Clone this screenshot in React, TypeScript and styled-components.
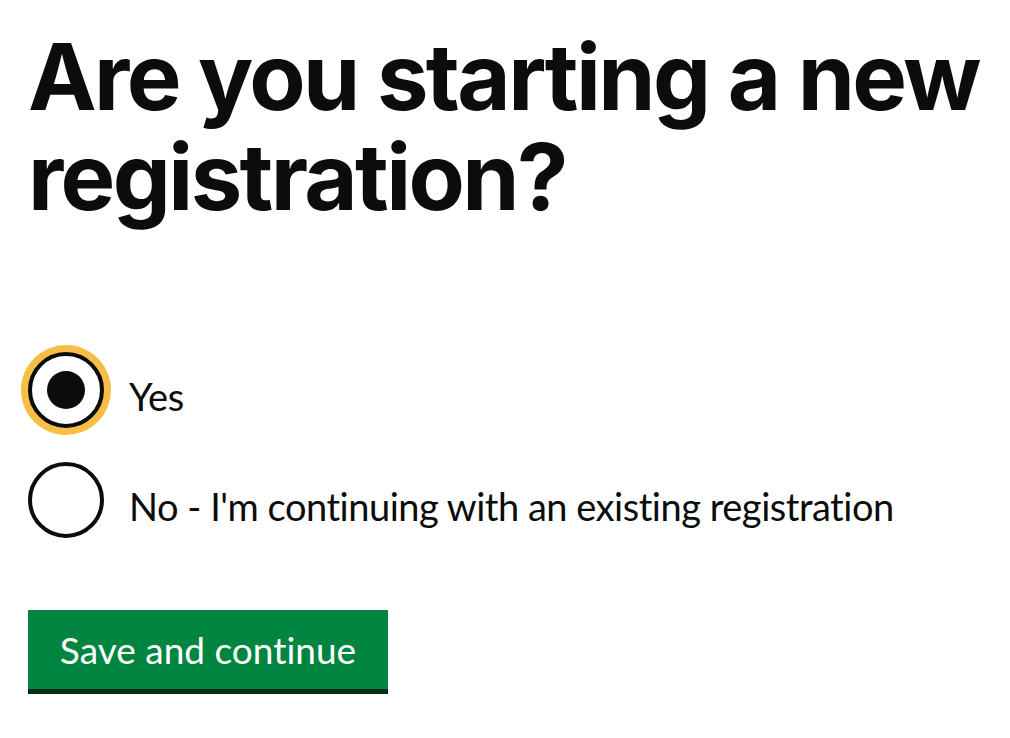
import React, { useState } from "react";
import styled, { createGlobalStyle } from "styled-components";

const GlobalStyle = createGlobalStyle`
    html, body {
        margin: 0;
        padding: 0;
        background: #ffffff;
    }
    body {
        font-family: Lato, "Liberation Sans", sans-serif;
        font-variant-ligatures: none;
        color: #0b0c0c;
    }
`;

const options = [
    { value: "yes", label: "Yes" },
    { value: "no", label: "No - I'm continuing with an existing registration" },
];

export default function App() {
    const [choice, setChoice] = useState("yes");

    return (
        <Page>
            <GlobalStyle />
            <Form onSubmit={(e) => e.preventDefault()}>
                <Fieldset>
                    <Heading>Are you starting a new registration?</Heading>
                    <Radios>
                        {options.map((o) => (
                            <RadioItem key={o.value}>
                                <RadioInput
                                    type="radio"
                                    name="new-registration"
                                    id={`reg-${o.value}`}
                                    value={o.value}
                                    checked={choice === o.value}
                                    onChange={() => setChoice(o.value)}
                                />
                                <RadioCircle $checked={choice === o.value} $focused={o.value === "yes"} />
                                <RadioLabel htmlFor={`reg-${o.value}`}>{o.label}</RadioLabel>
                            </RadioItem>
                        ))}
                    </Radios>
                </Fieldset>
                <SubmitButton type="submit">Save and continue</SubmitButton>
            </Form>
        </Page>
    );
}

const Page = styled.div`
    padding: 27px 28px 40px;
`;

const Form = styled.form`
    display: flex;
    flex-direction: column;
    align-items: flex-start;
`;

const Fieldset = styled.fieldset`
    border: 0;
    margin: 0;
    padding: 0;
    min-width: 0;
`;

const Heading = styled.h1`
    margin: 0 0 125px;
    font-family: Inter, "Liberation Sans", sans-serif;
    font-size: 92px;
    line-height: 100px;
    font-weight: 700;
    letter-spacing: -2.6px;
    width: 960px;
`;

const Radios = styled.div`
    display: flex;
    flex-direction: column;
    gap: 34px;
`;

const RadioItem = styled.div`
    position: relative;
    display: flex;
    align-items: center;
    gap: 25px;
    min-height: 76px;
`;

const RadioInput = styled.input`
    position: absolute;
    left: 0;
    top: 0;
    width: 76px;
    height: 76px;
    margin: 0;
    opacity: 0;
    cursor: pointer;
`;

const RadioCircle = styled.span<{ $checked: boolean; $focused: boolean }>`
    flex: none;
    box-sizing: border-box;
    width: 76px;
    height: 76px;
    border: 4px solid #0b0c0c;
    border-radius: 50%;
    background: #ffffff;
    display: flex;
    align-items: center;
    justify-content: center;
    box-shadow: ${(p) => (p.$focused ? "0 0 0 7px #f8bd47" : "none")};

    &::after {
        content: "";
        width: 38px;
        height: 38px;
        border-radius: 50%;
        background: #0b0c0c;
        opacity: ${(p) => (p.$checked ? 1 : 0)};
    }
`;

const RadioLabel = styled.label`
    font-size: 38px;
    line-height: 1.25;
    font-weight: 400;
    letter-spacing: -0.48px;
    padding-top: 14px;
    cursor: pointer;
`;

const SubmitButton = styled.button`
    margin-top: 72px;
    width: 360px;
    height: 79px;
    padding: 0;
    border: 0;
    border-radius: 0;
    background: #008540;
    box-shadow: 0 5px 0 #002d18;
    color: #ffffff;
    font-family: Lato, "Liberation Sans", sans-serif;
    font-variant-ligatures: none;
    font-size: 37px;
    line-height: 1;
    font-weight: 400;
    cursor: pointer;
`;
